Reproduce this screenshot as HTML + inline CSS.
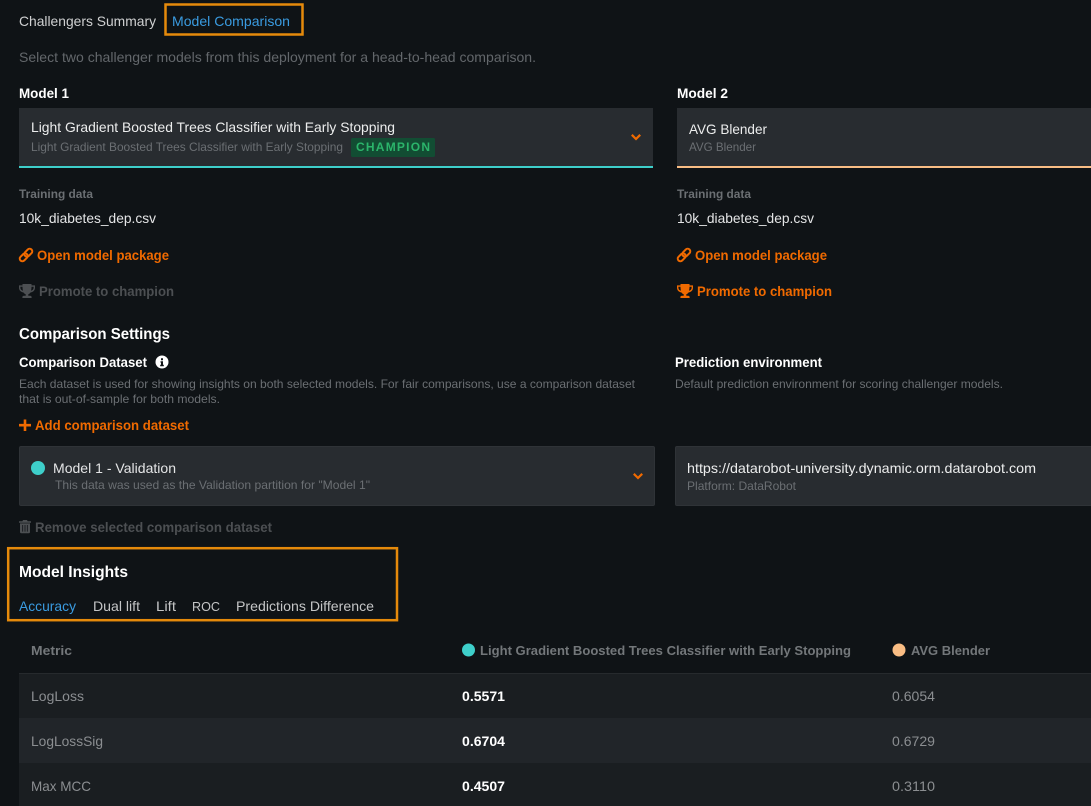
<!DOCTYPE html>
<html><head><meta charset="utf-8"><title>Model Comparison</title>
<style>
html,body{margin:0;padding:0;background:#0f1316;width:1091px;height:806px;overflow:hidden}
svg{display:block}
text{font-family:"Liberation Sans",sans-serif;font-size:14px;fill:#e4e5e6}
.b{font-weight:700}
.s{font-size:12px;fill:#6b6f73}
.o{fill:#f06a00;font-weight:700}
.g{fill:#4c4f52;font-weight:700}
.h{fill:#73777a;font-weight:700;font-size:13px}
.w{fill:#fff}
.v{fill:#8b8e91;font-size:14px}
</style></head><body>
<svg width="1091" height="806" viewBox="0 0 1091 806" xmlns="http://www.w3.org/2000/svg">
<defs>
<g id="link"><g fill="none" stroke="currentColor" stroke-width="2"><rect x="-4.500" y="-2.600" width="9" height="5.200" rx="2.600" transform="translate(4.700 9.300) rotate(-45)"/><rect x="-4.500" y="-2.600" width="9" height="5.200" rx="2.600" transform="translate(9.300 4.700) rotate(-45)"/></g></g>
<g id="trophy"><path fill="currentColor" d="M3.500 0h9v1.400H16v2.400c0 2.500-1.800 4.300-4.500 4.700-.6.900-1.300 1.500-2.200 1.800v1.500h1.800c.9 0 1.500.6 1.500 1.300v.9H3.400v-.9c0-.7.600-1.300 1.500-1.300h1.800v-1.500c-.9-.3-1.600-.9-2.200-1.800C1.800 8.100 0 6.300 0 3.800V1.400h3.500V0zM1.400 2.800v1c0 1.400.9 2.500 2.600 3-.3-1-.5-2.400-.5-4H1.400zm13.200 0h-2.100c0 1.600-.2 3-.5 4 1.700-.5 2.600-1.600 2.600-3v-1z"/></g>
<path id="chev" d="M-4.200 -2.200 0 2 4.200 -2.200" fill="none" stroke="#f06a00" stroke-width="2.200"/>
</defs>

<rect width="1091" height="806" fill="#0f1316"/>

<!-- top tabs -->
<text x="19" y="26" textLength="137" lengthAdjust="spacingAndGlyphs" style="fill:#cfd0d1">Challengers Summary</text>
<rect x="165.500" y="4.500" width="137" height="30" fill="none" stroke="#e58a0b" stroke-width="2.500"/>
<text x="172" y="26" textLength="118" lengthAdjust="spacingAndGlyphs" style="fill:#3a9be0">Model Comparison</text>
<text x="19" y="62" textLength="517" lengthAdjust="spacingAndGlyphs" style="fill:#63676b">Select two challenger models from this deployment for a head-to-head comparison.</text>

<!-- model 1 -->
<text class="b w" x="19" y="98" textLength="50" lengthAdjust="spacingAndGlyphs">Model 1</text>
<rect x="19" y="108" width="634" height="58" fill="#282c30"/>
<rect x="19" y="166" width="634" height="2" fill="#3ecfca"/>
<text x="31" y="132" textLength="364" lengthAdjust="spacingAndGlyphs" style="fill:#eceded">Light Gradient Boosted Trees Classifier with Early Stopping</text>
<text class="s" x="31" y="151" textLength="312" lengthAdjust="spacingAndGlyphs">Light Gradient Boosted Trees Classifier with Early Stopping</text>
<rect x="351" y="138" width="84" height="19" rx="1.500" fill="#124d33"/>
<text x="356" y="151" textLength="74" lengthAdjust="spacing" class="b" style="font-size:12px;fill:#2bb56b">CHAMPION</text>
<use href="#chev" x="636" y="137"/>

<text class="s b" x="19" y="198" textLength="74" lengthAdjust="spacingAndGlyphs">Training data</text>
<text x="19" y="223" textLength="137" lengthAdjust="spacingAndGlyphs">10k_diabetes_dep.csv</text>
<use href="#link" x="19" y="248" color="#f06a00"/>
<text class="o" x="37" y="260" textLength="132" lengthAdjust="spacingAndGlyphs">Open model package</text>
<use href="#trophy" x="19" y="284" color="#4c4f52"/>
<text class="g" x="39" y="296" textLength="135" lengthAdjust="spacingAndGlyphs">Promote to champion</text>

<!-- model 2 -->
<text class="b w" x="677" y="98" textLength="51" lengthAdjust="spacingAndGlyphs">Model 2</text>
<rect x="677" y="108" width="414" height="58" fill="#282c30"/>
<rect x="677" y="166" width="414" height="2" fill="#f9bd84"/>
<text x="689" y="134" textLength="78" lengthAdjust="spacingAndGlyphs" style="fill:#eceded">AVG Blender</text>
<text class="s" x="689" y="151" textLength="67" lengthAdjust="spacingAndGlyphs">AVG Blender</text>
<text class="s b" x="677" y="198" textLength="74" lengthAdjust="spacingAndGlyphs">Training data</text>
<text x="677" y="223" textLength="137" lengthAdjust="spacingAndGlyphs">10k_diabetes_dep.csv</text>
<use href="#link" x="677" y="248" color="#f06a00"/>
<text class="o" x="695" y="260" textLength="132" lengthAdjust="spacingAndGlyphs">Open model package</text>
<use href="#trophy" x="677" y="284" color="#f06a00"/>
<text class="o" x="697" y="296" textLength="135" lengthAdjust="spacingAndGlyphs">Promote to champion</text>

<!-- settings -->
<text class="b w" x="19" y="339" textLength="151" lengthAdjust="spacingAndGlyphs" style="font-size:16px">Comparison Settings</text>
<text class="b w" x="19" y="367" textLength="128" lengthAdjust="spacingAndGlyphs">Comparison Dataset</text>
<circle cx="162" cy="362" r="6.500" fill="#fff"/>
<path d="M161 358.200h2v2h-2zM160.500 361.200h2.500v3.600h.8v1.400h-3.600v-1.400h.8v-2.200h-.5z" fill="#0f1316"/>
<text class="s" x="19" y="388" textLength="616" lengthAdjust="spacingAndGlyphs">Each dataset is used for showing insights on both selected models. For fair comparisons, use a comparison dataset</text>
<text class="s" x="19" y="403" textLength="201" lengthAdjust="spacingAndGlyphs">that is out-of-sample for both models.</text>
<path d="M25 419.500v11.500M19 425.200h12" stroke="#f06a00" stroke-width="2.600" fill="none"/>
<text class="o" x="35" y="430" textLength="154" lengthAdjust="spacingAndGlyphs">Add comparison dataset</text>

<rect x="19.500" y="446.500" width="635" height="59" rx="1.500" fill="#282c30" stroke="#2f3337"/>
<circle cx="38" cy="468" r="7" fill="#3ecfca"/>
<text x="53" y="473" textLength="123" lengthAdjust="spacingAndGlyphs" style="fill:#e4e5e6">Model 1 - Validation</text>
<text class="s" x="55" y="489" textLength="315" lengthAdjust="spacingAndGlyphs">This data was used as the Validation partition for "Model 1"</text>
<use href="#chev" x="638" y="476"/>
<path fill="#4c4f52" fill-rule="evenodd" d="M23 520h4l.6 1.200H31v1.500H19v-1.500h3.400zM20 523.400h10V532c0 .7-.5 1.200-1.200 1.200h-7.600c-.7 0-1.200-.5-1.200-1.200zM22.300 525v6.600h.8V525zm2.300 0v6.600h.8V525zm2.300 0v6.600h.8V525z"/>
<text class="g" x="35" y="532" textLength="237" lengthAdjust="spacingAndGlyphs">Remove selected comparison dataset</text>

<text class="b w" x="675" y="367" textLength="147" lengthAdjust="spacingAndGlyphs">Prediction environment</text>
<text class="s" x="675" y="388" textLength="328" lengthAdjust="spacingAndGlyphs">Default prediction environment for scoring challenger models.</text>
<rect x="675.500" y="446.500" width="420" height="59" rx="1.500" fill="#282c30" stroke="#2f3337"/>
<text x="687" y="473" textLength="349" lengthAdjust="spacingAndGlyphs" style="fill:#eceded">https://datarobot-university.dynamic.orm.datarobot.com</text>
<text class="s" x="687" y="490" textLength="109" lengthAdjust="spacingAndGlyphs">Platform: DataRobot</text>

<!-- insights -->
<rect x="8.200" y="548.200" width="388.800" height="72" fill="none" stroke="#e58a0b" stroke-width="2.500"/>
<text class="b w" x="19" y="577" textLength="109" lengthAdjust="spacingAndGlyphs" style="font-size:16px">Model Insights</text>
<text x="19" y="611" textLength="57" lengthAdjust="spacingAndGlyphs" style="fill:#3a9be0">Accuracy</text>
<text x="93" y="611" textLength="47" lengthAdjust="spacingAndGlyphs" style="fill:#c4c5c6">Dual lift</text>
<text x="156" y="611" textLength="20" lengthAdjust="spacingAndGlyphs" style="fill:#c4c5c6">Lift</text>
<text x="192" y="611" style="fill:#c4c5c6;font-size:12.600px">ROC</text>
<text x="236" y="611" textLength="138" lengthAdjust="spacingAndGlyphs" style="fill:#c4c5c6">Predictions Difference</text>

<!-- table -->
<rect x="19" y="673" width="1072" height="1" fill="#262a2d"/>
<rect x="19" y="674" width="1072" height="44" fill="#1a1e21"/>
<rect x="19" y="718" width="1072" height="45" fill="#212529"/>
<rect x="19" y="763" width="1072" height="43" fill="#1a1e21"/>
<text class="h" x="31" y="655" textLength="41" lengthAdjust="spacingAndGlyphs">Metric</text>
<circle cx="468.500" cy="650" r="6.500" fill="#3ecfca"/>
<text class="h" x="480" y="655" textLength="371" lengthAdjust="spacingAndGlyphs">Light Gradient Boosted Trees Classifier with Early Stopping</text>
<circle cx="899" cy="650" r="6.500" fill="#f9bd84"/>
<text class="h" x="911" y="655" textLength="79" lengthAdjust="spacingAndGlyphs">AVG Blender</text>

<text class="v" x="31" y="701" textLength="53" lengthAdjust="spacingAndGlyphs">LogLoss</text>
<text class="b w" x="462" y="701" textLength="43" lengthAdjust="spacingAndGlyphs">0.5571</text>
<text class="v" x="892" y="701" textLength="43" lengthAdjust="spacingAndGlyphs">0.6054</text>
<text class="v" x="31" y="746" textLength="72" lengthAdjust="spacingAndGlyphs">LogLossSig</text>
<text class="b w" x="462" y="746" textLength="43" lengthAdjust="spacingAndGlyphs">0.6704</text>
<text class="v" x="892" y="746" textLength="43" lengthAdjust="spacingAndGlyphs">0.6729</text>
<text class="v" x="31" y="791" textLength="60" lengthAdjust="spacingAndGlyphs">Max MCC</text>
<text class="b w" x="462" y="791" textLength="43" lengthAdjust="spacingAndGlyphs">0.4507</text>
<text class="v" x="892" y="791" textLength="43" lengthAdjust="spacingAndGlyphs">0.3110</text>
</svg>
</body></html>
